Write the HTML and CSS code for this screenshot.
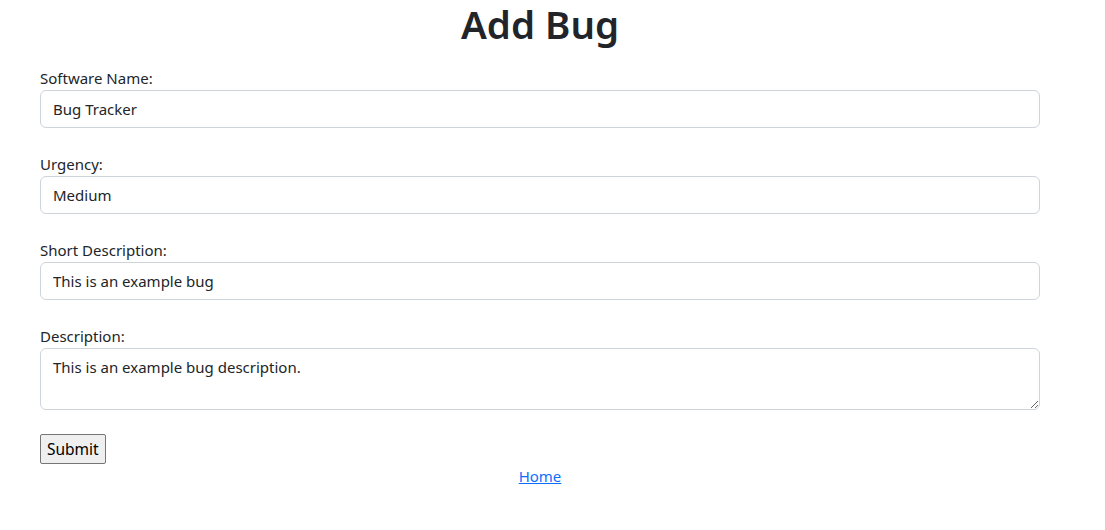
FILE: index.html
```html
<!DOCTYPE html>
<html>
<head>
<meta charset="utf-8">
<link rel="stylesheet" href="styles.css">
</head>
<body>
<div class="page">
  <h1 class="title">Add Bug</h1>
  <form class="bug-form">
    <div class="field">
      <label class="label">Software Name:</label>
      <input class="control" type="text" value="Bug Tracker">
    </div>
    <div class="field">
      <label class="label">Urgency:</label>
      <input class="control" type="text" value="Medium">
    </div>
    <div class="field">
      <label class="label">Short Description:</label>
      <input class="control" type="text" value="This is an example bug">
    </div>
    <div class="field">
      <label class="label">Description:</label>
      <textarea class="control area" rows="2">This is an example bug description.</textarea>
    </div>
    <button class="submit" type="button">Submit</button>
  </form>
  <p class="home"><a href="#">Home</a></p>
</div>
</body>
</html>
```
FILE: styles.css
```css
* { box-sizing: border-box; }
body {
  margin: 0;
  font-family: "Segoe UI", "Noto Sans", sans-serif;
  font-size: 15px;
  line-height: 24px;
  color: #212529;
  background: #fff;
}
.page {
  width: 1000px;
  margin-left: 40px;
}
.title {
  margin: 0 0 18px;
  font-size: 38.5px;
  line-height: 48px;
  font-weight: 600;
  text-align: center;
}
.bug-form { margin: 0; }
.field {
  display: flex;
  flex-direction: column;
  margin-bottom: 24px;
}
.label { display: block; }
.control {
  display: block;
  width: 100%;
  height: 38px;
  padding: 6px 12px;
  font: inherit;
  line-height: 24px;
  color: #212529;
  border: 1px solid #ced4da;
  border-radius: 6px;
  background: #fff;
}
.area {
  height: 62px;
  resize: vertical;
}
.submit {
  font: inherit;
  font-size: 15.5px;
  line-height: 24px;
  margin: 0;
  padding: 1px 6px;
  border: 1px solid #767676;
  border-radius: 2px;
  background: #efefef;
  color: #000;
  height: 30px;
}
.home {
  margin: 0;
  text-align: center;
}
.home a { color: #0d6efd; }
```
